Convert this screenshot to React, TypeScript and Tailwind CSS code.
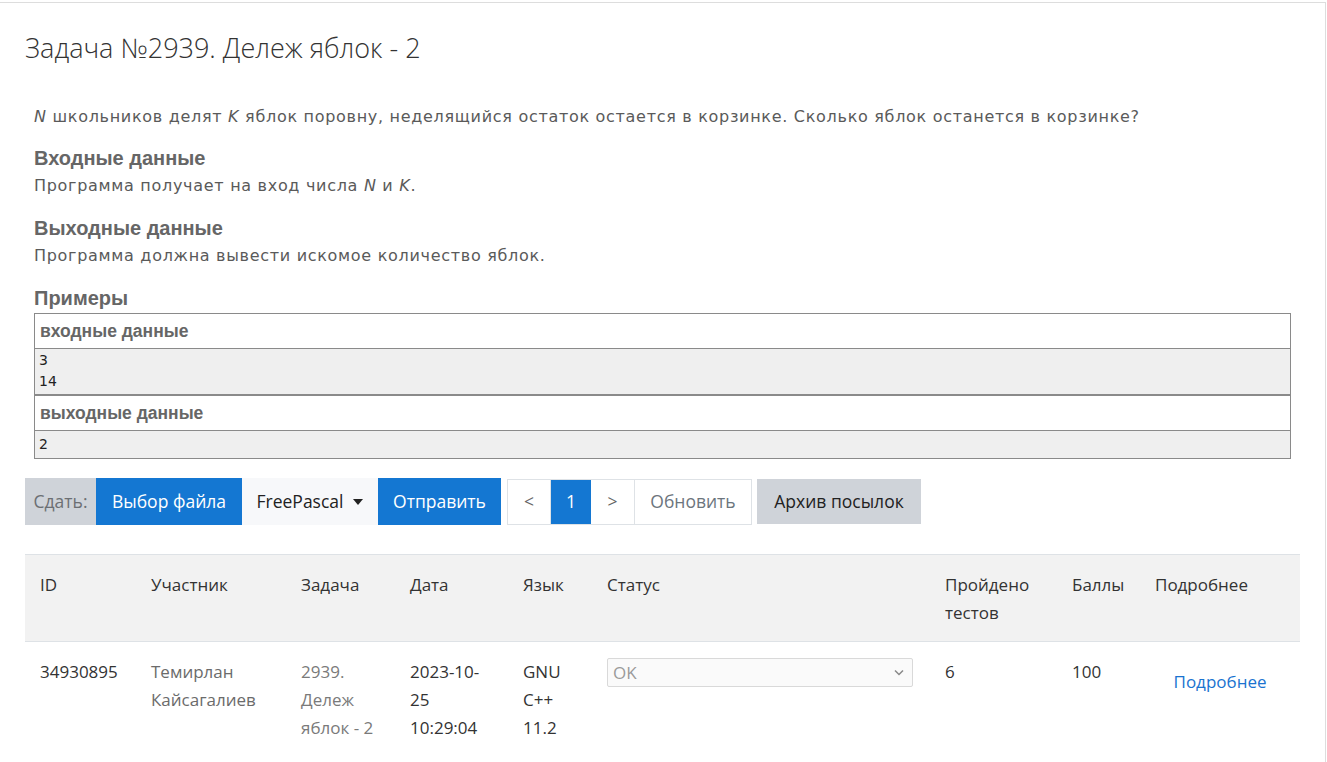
import React from "react";

const seg = { fontFamily: '"Open Sans", "Noto Sans", sans-serif' };
const ver = { fontFamily: '"DejaVu Sans", Verdana, sans-serif' };
const ari = { fontFamily: '"Liberation Sans", Arial, sans-serif' };

export default function App() {
  return (
    <div className="bg-white w-[1327px] h-[762px] overflow-hidden pt-[2px]">
      <div className="w-[1326px] h-[800px] border-t border-r border-[#dddddd] pl-[25px] pr-[26px]">
        <h1
          className="text-[27px] font-light text-[#333] pt-[27px] leading-[36px]"
          style={seg}
        >
          Задача №2939. Дележ яблок - 2
        </h1>
        <div className="pl-[9px] pr-[9px] pt-[39px] text-[#5a5a5a]" style={ver}>
          <p className="text-[16px] leading-[24px] tracking-[0.7px]">
            <i>N</i> школьников делят <i>K</i> яблок поровну, неделящийся остаток остается в корзинке. Сколько яблок останется в корзинке?
          </p>
          <h3 className="mt-[16px] text-[20px] font-bold leading-[26px] text-[#666]" style={ari}>
            Входные данные
          </h3>
          <p className="text-[16px] leading-[30px] tracking-[0.7px]">
            Программа получает на вход числа <i>N</i> и <i>K</i>.
          </p>
          <h3 className="mt-[14px] text-[20px] font-bold leading-[26px] text-[#666]" style={ari}>
            Выходные данные
          </h3>
          <p className="text-[16px] leading-[30px] tracking-[0.7px]">
            Программа должна вывести искомое количество яблок.
          </p>
          <h3 className="mt-[14px] text-[20px] font-bold leading-[26px] text-[#666]" style={ari}>
            Примеры
          </h3>
          <div className="mt-[2px] border border-[#8a8a8a] w-[1257px]">
            <div
              className="h-[35px] px-[5px] flex items-center text-[17.5px] font-bold text-[#666] border-b border-[#8a8a8a]"
              style={ari}
            >
              входные данные
            </div>
            <div
              className="h-[47px] bg-[#efefef] px-[4px] pt-[1px] text-[14px] leading-[21px] text-[#222] border-b-[2px] border-[#8a8a8a]"
              style={ver}
            >
              <div>3</div>
              <div>14</div>
            </div>
            <div
              className="h-[35px] px-[5px] flex items-center text-[17.5px] font-bold text-[#666] border-b border-[#8a8a8a]"
              style={ari}
            >
              выходные данные
            </div>
            <div className="h-[27px] bg-[#efefef] px-[4px] pt-[3px] text-[14px] leading-[21px] text-[#222]" style={ver}>
              2
            </div>
          </div>
        </div>

        <div className="mt-[19px] flex items-center h-[47px] text-[17.5px]" style={seg}>
          <div className="h-[47px] w-[71px] bg-[#cfd3d9] text-[#6c6f73] flex items-center justify-center">
            Сдать:
          </div>
          <div className="h-[47px] w-[146px] bg-[#1477d2] text-white flex items-center justify-center">
            Выбор файла
          </div>
          <div className="h-[47px] w-[136px] bg-[#f7f8fa] text-[#222] flex items-center justify-center gap-[10px]">
            FreePascal
            <span className="inline-block w-0 h-0 border-l-[5px] border-r-[5px] border-t-[6px] border-l-transparent border-r-transparent border-t-[#222]" />
          </div>
          <div className="h-[47px] w-[123px] bg-[#1477d2] text-white flex items-center justify-center">
            Отправить
          </div>
          <div className="ml-[6px] h-[46px] flex border border-[#dee2e6] bg-white">
            <div className="w-[43px] flex items-center justify-center text-[#666] border-r border-[#dee2e6]">&lt;</div>
            <div className="w-[40px] flex items-center justify-center bg-[#1477d2] text-white">1</div>
            <div className="w-[44px] flex items-center justify-center text-[#666] border-r border-[#dee2e6]">&gt;</div>
            <div className="w-[116px] flex items-center justify-center text-[#6c757d]">Обновить</div>
          </div>
          <div className="ml-[5px] h-[45px] w-[164px] bg-[#cfd3d9] text-[#222] flex items-center justify-center">
            Архив посылок
          </div>
        </div>

        <table className="mt-[29px] w-[1275px] table-fixed border-collapse text-[17px]" style={seg}>
          <colgroup>
            <col className="w-[111px]" />
            <col className="w-[150px]" />
            <col className="w-[109px]" />
            <col className="w-[113px]" />
            <col className="w-[84px]" />
            <col className="w-[338px]" />
            <col className="w-[127px]" />
            <col className="w-[83px]" />
            <col className="w-[160px]" />
          </colgroup>
          <thead>
            <tr className="bg-[#f2f2f2] border-t border-b border-[#dee2e6] text-[#333] align-top leading-[28px]">
              <th className="font-normal text-left pl-[15px] pt-[16px] pb-[15px] h-[87px]">ID</th>
              <th className="font-normal text-left pl-[15px] pt-[16px]">Участник</th>
              <th className="font-normal text-left pl-[15px] pt-[16px]">Задача</th>
              <th className="font-normal text-left pl-[15px] pt-[16px]">Дата</th>
              <th className="font-normal text-left pl-[15px] pt-[16px]">Язык</th>
              <th className="font-normal text-left pl-[15px] pt-[16px]">Статус</th>
              <th className="font-normal text-left pl-[15px] pt-[16px]">Пройдено<br />тестов</th>
              <th className="font-normal text-left pl-[15px] pt-[16px]">Баллы</th>
              <th className="font-normal text-left pl-[15px] pt-[16px]">Подробнее</th>
            </tr>
          </thead>
          <tbody>
            <tr className="align-top leading-[28px]">
              <td className="pl-[15px] pt-[16px] text-[#333]">34930895</td>
              <td className="pl-[15px] pt-[16px] text-[#6b6b6b]">Темирлан Кайсагалиев</td>
              <td className="pl-[15px] pt-[16px] pr-[10px] text-[#7a7a7a]">2939. Дележ яблок - 2</td>
              <td className="pl-[15px] pt-[16px] pr-[22px] text-[#333]">2023-10-25 10:29:04</td>
              <td className="pl-[15px] pt-[16px] pr-[20px] text-[#333]">GNU C++ 11.2</td>
              <td className="pl-[15px] pt-[16px] pr-[17px]">
                <div className="h-[29px] border border-[#d9d9d9] rounded-[2px] bg-[#fafafa] flex items-center justify-between pl-[5px] pr-[8px] text-[#9a9a9a]">
                  <span className="text-[17px]">OK</span>
                  <svg width="10" height="7" viewBox="0 0 10 7" fill="none">
                    <path d="M1 1.5 L5 5.5 L9 1.5" stroke="#888" strokeWidth="1.5" />
                  </svg>
                </div>
              </td>
              <td className="pl-[15px] pt-[16px] text-[#333]">6</td>
              <td className="pl-[15px] pt-[16px] text-[#333]">100</td>
              <td className="pt-[26px] text-center text-[#1a73d0]">Подробнее</td>
            </tr>
          </tbody>
        </table>
      </div>
    </div>
  );
}
